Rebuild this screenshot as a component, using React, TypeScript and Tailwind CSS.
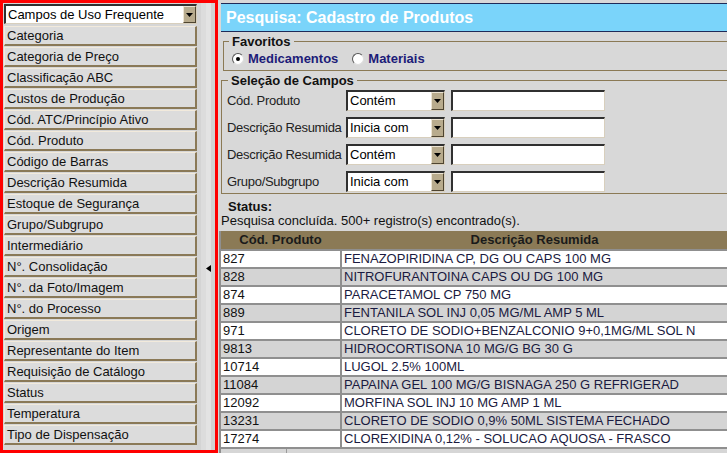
import React from "react";

const fields = [
  "Categoria",
  "Categoria de Preço",
  "Classificação ABC",
  "Custos de Produção",
  "Cód. ATC/Princípio Ativo",
  "Cód. Produto",
  "Código de Barras",
  "Descrição Resumida",
  "Estoque de Segurança",
  "Grupo/Subgrupo",
  "Intermediário",
  "N°. Consolidação",
  "N°. da Foto/Imagem",
  "N°. do Processo",
  "Origem",
  "Representante do Item",
  "Requisição de Catálogo",
  "Status",
  "Temperatura",
  "Tipo de Dispensação",
];

const rows: [string, string][] = [
  ["827", "FENAZOPIRIDINA CP, DG OU CAPS 100 MG"],
  ["828", "NITROFURANTOINA CAPS OU DG 100 MG"],
  ["874", "PARACETAMOL CP 750 MG"],
  ["889", "FENTANILA SOL INJ 0,05 MG/ML AMP 5 ML"],
  ["971", "CLORETO DE SODIO+BENZALCONIO 9+0,1MG/ML SOL N"],
  ["9813", "HIDROCORTISONA 10 MG/G BG 30 G"],
  ["10714", "LUGOL 2.5% 100ML"],
  ["11084", "PAPAINA GEL 100 MG/G BISNAGA 250 G REFRIGERAD"],
  ["12092", "MORFINA SOL INJ 10 MG AMP 1 ML"],
  ["13231", "CLORETO DE SODIO 0,9% 50ML SISTEMA FECHADO"],
  ["17274", "CLOREXIDINA 0,12% - SOLUCAO AQUOSA - FRASCO"],
];

const criteria: [string, string][] = [
  ["Cód. Produto", "Contém"],
  ["Descrição Resumida", "Inicia com"],
  ["Descrição Resumida", "Contém"],
  ["Grupo/Subgrupo", "Inicia com"],
];

function DropBtn() {
  return (
    <div className="flex w-[13px] shrink-0 items-center justify-center border-t border-l border-b border-r border-t-[#ece4d4] border-l-[#ece4d4] border-b-[#4e4430] border-r-[#4e4430] bg-[#b8ab8d]">
      <svg width="7" height="4" viewBox="0 0 7 4">
        <path d="M0 0h7L3.5 4z" fill="#000" />
      </svg>
    </div>
  );
}

function Combo({ value, className }: { value: string; className: string }) {
  return (
    <div
      className={`flex shrink-0 border-t-2 border-l-2 border-b border-r border-t-[#303030] border-l-[#303030] border-b-[#d8cfbd] border-r-[#d8cfbd] bg-white ${className}`}
    >
      <span className="flex-1 truncate pl-[2px] text-[13px] leading-[17px] text-black">{value}</span>
      <DropBtn />
    </div>
  );
}

function Radio({ checked }: { checked?: boolean }) {
  return (
    <span className="flex h-[12px] w-[12px] items-center justify-center rounded-full border border-t-[#555] border-l-[#555] border-b-[#ddd] border-r-[#ddd] bg-white">
      {checked && <span className="h-[4px] w-[4px] rounded-full bg-black" />}
    </span>
  );
}

export default function App() {
  return (
    <div className="flex h-[453px] w-[727px] overflow-hidden bg-[#d8d8d8] font-['Liberation_Sans',Arial,sans-serif]">
      {/* Left panel */}
      <div className="flex h-full w-[218px] shrink-0 border-[3px] border-[#ff0000] bg-[#d6d6d6]">
        <div className="flex w-[194px] shrink-0 flex-col pl-px pt-px">
          <Combo value="Campos de Uso Frequente" className="h-[20px] w-[193px]" />
          <div className="mt-[2px] flex flex-col gap-px">
            {fields.map((f) => (
              <div
                key={f}
                className="h-[20px] w-[193px] whitespace-nowrap border-t border-l border-b-2 border-r-2 border-t-[#f2eadc] border-l-[#f2eadc] border-b-[#8a7957] border-r-[#8a7957] bg-[#dcdcdc] pl-[2px] text-[13px] leading-[17px] text-[#111]"
              >
                {f}
              </div>
            ))}
          </div>
        </div>
        <div className="flex flex-1">
          <div className="w-[4px] bg-[#d4d4d4]" />
          <div className="w-[5px] bg-[#dcdcdc]" />
          <div className="flex w-[5px] flex-col items-center bg-[#e3e3e3] pt-[262px]">
            <svg width="5" height="7" viewBox="0 0 5 7">
              <path d="M5 0v7L0 3.5z" fill="#000" />
            </svg>
          </div>
          <div className="flex-1 bg-[#d2d2d2]" />
        </div>
      </div>

      {/* Main */}
      <div className="flex min-w-0 flex-1 flex-col overflow-hidden pt-[3px]">
        <div className="ml-[3px] flex h-[29px] shrink-0 items-center whitespace-nowrap border-y border-[#1e2a58] bg-[#7ad4fa] pl-[5px] text-[16px] font-bold text-white">
          Pesquisa: Cadastro de Produtos
        </div>

        <fieldset className="ml-[5px] mt-[2px] h-[37px] w-[520px] shrink-0 border border-[#8b7a55]">
          <legend className="ml-[5px] px-[3px] text-[13px] font-bold leading-[15px] text-[#111]">Favoritos</legend>
          <div className="flex h-[18px] items-center whitespace-nowrap pl-[8px] pt-[2px] text-[13px] font-bold text-[#1c1c78]">
            <Radio checked />
            <span className="ml-[4px]">Medicamentos</span>
            <span className="ml-[14px]">
              <Radio />
            </span>
            <span className="ml-[4px]">Materiais</span>
          </div>
        </fieldset>

        <fieldset className="ml-[3px] mt-[2px] h-[121px] w-[520px] shrink-0 border border-[#8b7a55]">
          <legend className="ml-[6px] px-[3px] text-[13px] font-bold leading-[15px] text-[#111]">Seleção de Campos</legend>
          <div className="mt-[2px] flex flex-col gap-[6px] pl-[5px]">
            {criteria.map(([label, op], i) => (
              <div key={i} className="flex h-[21px] items-center">
                <span className="w-[119px] shrink-0 whitespace-nowrap text-[13px] tracking-[-0.3px] text-[#222]">{label}</span>
                <Combo value={op} className="h-[21px] w-[99px]" />
                <div className="ml-[6px] h-[21px] w-[154px] shrink-0 border-t-2 border-l-2 border-b border-r border-t-[#303030] border-l-[#303030] border-b-[#d8cfbd] border-r-[#d8cfbd] bg-white" />
              </div>
            ))}
          </div>
        </fieldset>

        <div className="ml-[10px] mt-[5px] h-[15px] text-[13px] font-bold leading-[15px] text-[#111]">Status:</div>
        <div className="ml-[3px] h-[14px] whitespace-nowrap text-[13px] leading-[14px] text-[#111]">
          Pesquisa concluída. 500+ registro(s) encontrado(s).
        </div>

        <div className="ml-px mt-[3px] flex flex-1 flex-col gap-[2px] bg-[#8f8f8f] pl-[2px]">
          <div className="grid h-[18px] shrink-0 grid-cols-[119px_1fr] gap-[2px] bg-[#8b7a56] text-[13px] font-bold leading-[18px] text-[#1a1a1a]">
            <div className="text-center">Cód. Produto</div>
            <div className="text-center">Descrição Resumida</div>
          </div>
          {rows.map(([code, desc], i) => (
            <div key={code} className="grid h-[16px] shrink-0 grid-cols-[119px_1fr] gap-[2px] text-[13px] leading-[16px]">
              <div className={`pl-[2px] text-[#111] ${i % 2 === 0 ? "bg-white" : "bg-[#d4d4d4]"}`}>{code}</div>
              <div className={`overflow-hidden whitespace-nowrap pl-[2px] text-[#1a1a40] ${i % 2 === 0 ? "bg-white" : "bg-[#d4d4d4]"}`}>{desc}</div>
            </div>
          ))}
          <div className="flex flex-1 bg-[#d6d6d6]">
            <div className="w-[66px] border-r border-[#9a9a9a]" />
          </div>
        </div>
      </div>
    </div>
  );
}
